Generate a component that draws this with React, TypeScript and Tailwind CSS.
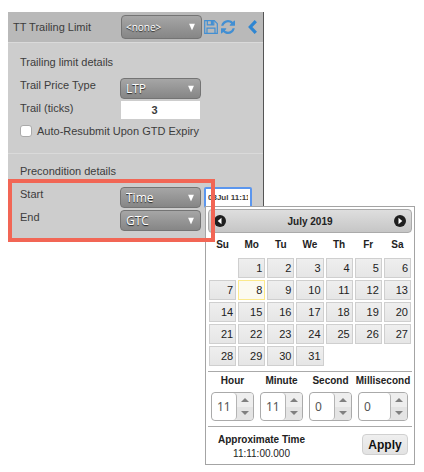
import React, { useState } from "react";

const sans = "font-['Liberation_Sans',Arial,sans-serif]";

function PanelSelect({ id, label, options, tall = false }: { id: string; label: string; options: string[]; tall?: boolean }) {
  return (
    <span className="relative block w-[81px] shrink-0">
      <select
        id={id}
        aria-label={label}
        defaultValue={options[0]}
        className={`block w-full appearance-none rounded border border-[#747474] bg-linear-to-b from-[#a6a6a6] to-[#868686] font-['Open_Sans',sans-serif] text-white outline-none [text-shadow:0_1px_1px_#222] ${
          tall ? "h-6 pl-1 text-[10px]" : "h-[21px] pl-[5px] text-xs leading-4"
        }`}
      >
        {options.map((o) => (
          <option key={o}>{o}</option>
        ))}
      </select>
      <svg viewBox="0 0 6 7" className="pointer-events-none absolute top-1/2 right-[7px] h-[7px] w-[6px] -translate-y-1/2 fill-white">
        <path d="M0 0h6L3 7z" />
      </svg>
    </span>
  );
}

function Row({ label, htmlFor, children }: { label: string; htmlFor: string; children: React.ReactNode }) {
  return (
    <div className="flex h-[23px] items-start">
      <label htmlFor={htmlFor} className="w-[100px] shrink-0 leading-[14px]">
        {label}
      </label>
      {children}
    </div>
  );
}

function Spinner({ id, label, initial, wide = false }: { id: string; label: string; initial: number; wide?: boolean }) {
  const [value, setValue] = useState(initial);
  return (
    <div className={wide ? "w-[50px]" : "w-[43px]"}>
      <label htmlFor={id} className="flex h-5 justify-center text-[10px] leading-[18px] font-bold whitespace-nowrap text-[#222]">
        {label}
      </label>
      <div className="flex h-[29px] overflow-hidden rounded border border-[#aaa] bg-[#ececec]">
        <input
          id={id}
          value={value}
          onChange={(e) => setValue(Number(e.target.value) || 0)}
          className="min-w-0 flex-1 rounded border-r border-[#b4b4b4] bg-white pl-[5px] font-['Noto_Sans',Verdana,sans-serif] text-xs text-[#555] outline-none"
        />
        <div className="flex w-4 flex-col">
          <button type="button" aria-label={`Increase ${label}`} onClick={() => setValue(value + 1)} className="flex flex-1 items-center justify-center bg-[#eee]">
            <svg viewBox="0 0 8 4" className="h-1 w-2 fill-[#808080]">
              <path d="M4 0l4 4H0z" />
            </svg>
          </button>
          <button type="button" aria-label={`Decrease ${label}`} onClick={() => setValue(Math.max(0, value - 1))} className="flex flex-1 items-center justify-center bg-[#e4e4e4]">
            <svg viewBox="0 0 8 4" className="h-1 w-2 fill-[#808080]">
              <path d="M0 0h8L4 4z" />
            </svg>
          </button>
        </div>
      </div>
    </div>
  );
}

function MonthButton({ label, next = false }: { label: string; next?: boolean }) {
  return (
    <button type="button" aria-label={label}>
      <svg viewBox="0 0 12 12" className="block size-3">
        <circle cx="6" cy="6" r="6" fill="#1f1f1f" />
        <path d={next ? "M4.5 2.8v6.4L8.3 6z" : "M7.5 2.8v6.4L3.7 6z"} fill="#fff" />
      </svg>
    </button>
  );
}

const weekdays = ["Su", "Mo", "Tu", "We", "Th", "Fr", "Sa"];
const weeks = [0, 1, 2, 3, 4].map((w) => weekdays.map((_, d) => w * 7 + d));

function DatePicker() {
  const [selected, setSelected] = useState(8);
  return (
    <div className="absolute top-[19px] left-px w-[210px] border border-[#a4a4a4] bg-white p-[2px] text-[#222]">
      <div className="flex h-6 items-center justify-between rounded border border-[#aaa] bg-linear-to-b from-[#dedede] to-[#c6c6c6] px-[5px]">
        <MonthButton label="Previous month" />
        <span className="text-[10px] font-bold">July 2019</span>
        <MonthButton label="Next month" next />
      </div>
      <table className="w-full table-fixed border-collapse text-[11px]">
        <thead>
          <tr className="h-6">
            {weekdays.map((d) => (
              <th key={d} scope="col" className="p-0 text-[10px] leading-4 font-bold">
                {d}
              </th>
            ))}
          </tr>
        </thead>
        <tbody>
          {weeks.map((week) => (
            <tr key={week[0]} className="h-[22px]">
              {week.map((day) => (
                <td key={day} className="p-px">
                  {day > 0 && day < 32 && (
                    <button
                      type="button"
                      onClick={() => setSelected(day)}
                      className={`block h-5 w-full border pr-[2px] text-right leading-4 ${
                        day === selected ? "border-[#fbe98c] bg-[#fcfaf0]" : "border-[#cfcfcf] bg-linear-to-b from-[#efefef] to-[#e6e6e6]"
                      }`}
                    >
                      {day}
                    </button>
                  )}
                </td>
              ))}
            </tr>
          ))}
        </tbody>
      </table>
      <div className="mt-1 flex h-[55px] gap-[6px] border-t border-[#aaa] pl-[3px]">
        <Spinner id="hour" label="Hour" initial={11} />
        <Spinner id="minute" label="Minute" initial={11} />
        <Spinner id="second" label="Second" initial={0} />
        <Spinner id="millisecond" label="Millisecond" initial={0} wide />
      </div>
      <div className="flex h-9 items-center justify-between border-t border-[#aaa] pr-1 pl-[10px]">
        <div className="pt-1 text-center text-[10px] leading-[14px]">
          <div className="font-bold">Approximate Time</div>
          <output>11:11:00.000</output>
        </div>
        <button type="button" className="h-[21px] w-[46px] rounded border border-[#d0d0d0] bg-linear-to-b from-[#efefef] to-[#e3e3e3] text-xs leading-4 font-bold text-[#111]">
          Apply
        </button>
      </div>
    </div>
  );
}

export default function App() {
  return (
    <main className={`min-h-screen bg-white pt-3 pl-2 text-[11px] text-[#3c3c3c] ${sans}`}>
      <section className="w-64 border-r border-[#555] bg-[#cdcdcd]">
        <header className="flex h-[31px] items-center border-b border-[#dadada] bg-[#b9b9b9] pl-[5px]">
          <h1 className="w-[108px] shrink-0">TT Trailing Limit</h1>
          <PanelSelect id="template" label="Template" options={["<none>"]} tall />
          <button type="button" aria-label="Save" className="ml-[2px]">
            <svg viewBox="0 0 14 14" className="block size-[14px] fill-none stroke-[#428fd3]" strokeWidth="1.2">
              <path d="M.7.7h9.6l3 3v9.6H.7z" />
              <path d="M3.3.7v4.2h6.5V.7M7.4 1.6h1v2.2h-1zM3 13.3V8.2h8v5.1" />
            </svg>
          </button>
          <button type="button" aria-label="Refresh" className="ml-[3px]">
            <svg viewBox="0 0 1536 1536" className="block size-[14px] fill-[#428fd3]">
              <path d="M1511 928q0 5-1 7-64 268-268 434.500T764 1536q-146 0-282.500-55T238 1324l-129 129q-19 19-45 19t-45-19-19-45V960q0-26 19-45t45-19h448q26 0 45 19t19 45-19 45l-137 137q71 66 161 102t187 36q134 0 250-65t186-179q11-17 53-117 8-23 30-23h192q13 0 22.500 9.500t9.500 22.500zm25-800v448q0 26-19 45t-45 19h-448q-26 0-45-19t-19-45 19-45l138-138Q969 256 768 256q-134 0-250 65T332 500q-11 17-53 117-8 23-30 23H50q-13 0-22.500-9.500T18 608v-7q65-268 270-434.500T768 0q146 0 284 55.500T1297 212l130-129q19-19 45-19t45 19 19 45z" />
            </svg>
          </button>
          <button type="button" aria-label="Collapse" className="ml-[13px]">
            <svg viewBox="0 0 9 14" className="block h-[14px] w-[9px] fill-none stroke-[#2f86d2]" strokeWidth="3.2">
              <path d="M7.8 1.2L2.3 7l5.5 5.8" />
            </svg>
          </button>
        </header>
        <div className="border-b border-[#dadada] pt-3 pb-[6px] pl-3">
          <h2 className="h-[23px] leading-[14px]">Trailing limit details</h2>
          <Row label="Trail Price Type" htmlFor="price-type">
            <PanelSelect id="price-type" label="Trail Price Type" options={["LTP"]} />
          </Row>
          <Row label="Trail (ticks)" htmlFor="ticks">
            <input id="ticks" defaultValue="3" className="ml-px h-[18px] w-[79px] bg-white pr-3 text-center font-bold outline-none" />
          </Row>
          <div className="flex h-[23px] items-start gap-[5px]">
            <input id="resubmit" type="checkbox" className="mt-px size-3 appearance-none rounded-[3px] border border-[#aaa] bg-white checked:bg-[#428fd3]" />
            <label htmlFor="resubmit" className="leading-[14px]">
              Auto-Resubmit Upon GTD Expiry
            </label>
          </div>
        </div>
        <div className="pt-[9px] pl-3">
          <h2 className="leading-4">Precondition details</h2>
          <div className="relative pt-2 pb-[9px]">
            <Row label="Start" htmlFor="start">
              <PanelSelect id="start" label="Start" options={["Time"]} />
              <div className="relative ml-[3px] w-12">
                <input
                  aria-label="Start time"
                  defaultValue="03Jul 11:11"
                  className="block h-[21px] w-full rounded-xs border-2 border-[#5b96ee] bg-white px-[2px] text-[8px] font-bold outline-none"
                />
                <DatePicker />
              </div>
            </Row>
            <Row label="End" htmlFor="end">
              <PanelSelect id="end" label="End" options={["GTC"]} />
            </Row>
            <div className="pointer-events-none absolute inset-y-0 -left-3 w-[207px] border-4 border-[#f26655]" />
          </div>
        </div>
      </section>
    </main>
  );
}
